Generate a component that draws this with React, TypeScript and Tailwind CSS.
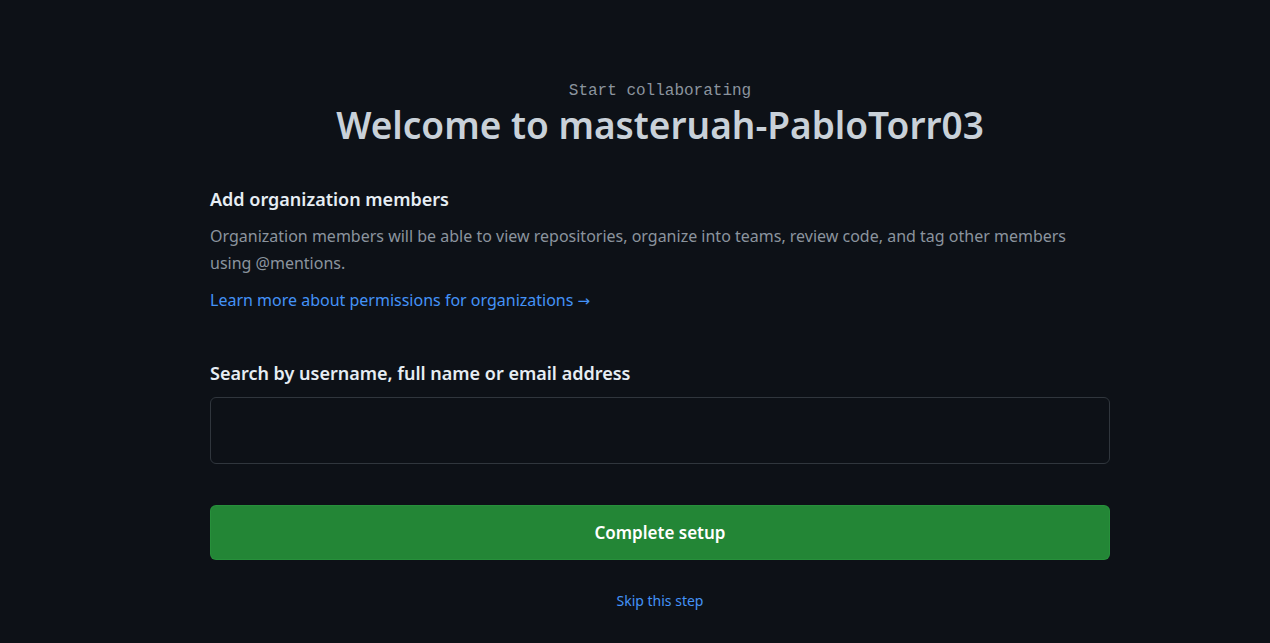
const sans = "font-['Segoe_UI','Noto_Sans','Liberation_Sans',sans-serif]"

export default function App() {
  return (
    <div className={`min-h-[643px] w-full bg-[#0d1117] pl-[50px] ${sans}`}>
      <div className="mx-auto w-[900px] pt-[80px]">
        {/* Header */}
        <div className="text-center">
          <p className="font-['Liberation_Mono',monospace] text-[16px] leading-[22px] text-[#8b949e]">
            Start collaborating
          </p>
          <h1 className="-mt-[1px] text-[37px] font-semibold leading-[48px] text-[#c9d1d9]">
            Welcome to masteruah-PabloTorr03
          </h1>
        </div>

        {/* Members */}
        <div className="mt-[36px]">
          <h2 className="text-[18px] font-semibold leading-[28px] text-[#e6edf3]">Add organization members</h2>
          <p className="mt-[10px] text-[16px] leading-[27px] text-[#8b949e]">
            Organization members will be able to view repositories, organize into teams, review code, and tag other members
            using @mentions.
          </p>
          <a href="#" className="mt-[11px] block text-[16px] leading-[24px] text-[#4493f8]">
            Learn more about permissions for organizations{" "}
            <span className="font-['DejaVu_Sans',sans-serif] text-[15px]">→</span>
          </a>
        </div>

        {/* Search */}
        <div className="mt-[46px]">
          <label className="block text-[18px] font-semibold leading-[28px] text-[#e6edf3]">
            Search by username, full name or email address
          </label>
          <input
            type="text"
            className="mt-[10px] block h-[67px] w-full rounded-[6px] border border-[#30363d] bg-[#0d1117] px-3 text-[16px] text-[#e6edf3] outline-none"
          />
        </div>

        <button className="mt-[41px] flex h-[55px] w-full items-center justify-center rounded-[6px] border border-[#2ea043]/40 bg-[#238636] text-[17px] font-semibold text-white">
          Complete setup
        </button>

        <div className="mt-[28px] text-center">
          <a href="#" className="text-[14px] leading-[20px] text-[#4493f8]">
            Skip this step
          </a>
        </div>
      </div>
    </div>
  )
}
